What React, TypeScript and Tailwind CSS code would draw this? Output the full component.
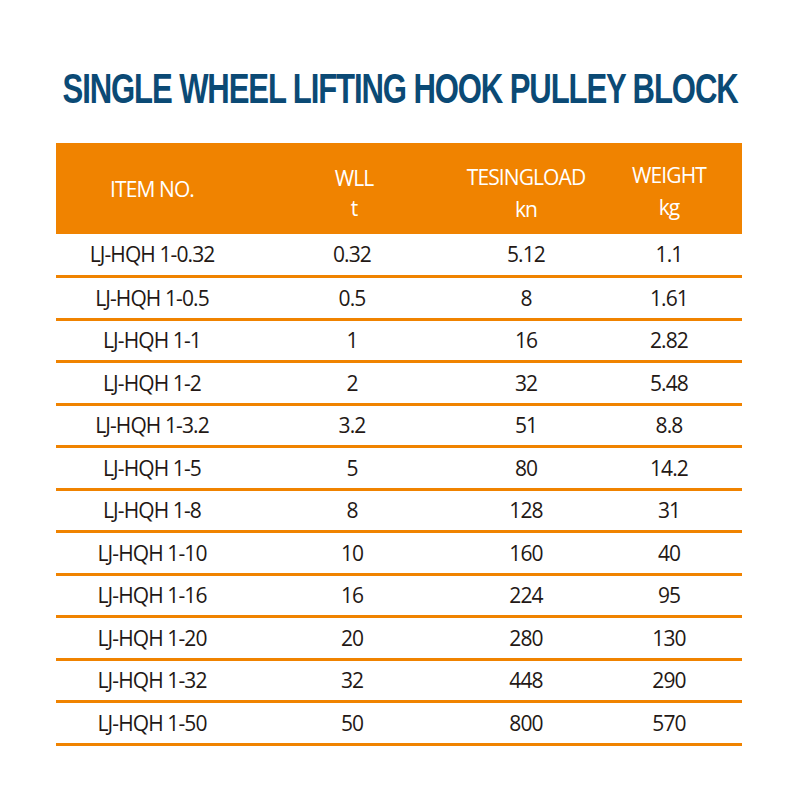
import React from 'react'

const rows = [
  ['LJ-HQH 1-0.32', '0.32', '5.12', '1.1'],
  ['LJ-HQH 1-0.5', '0.5', '8', '1.61'],
  ['LJ-HQH 1-1', '1', '16', '2.82'],
  ['LJ-HQH 1-2', '2', '32', '5.48'],
  ['LJ-HQH 1-3.2', '3.2', '51', '8.8'],
  ['LJ-HQH 1-5', '5', '80', '14.2'],
  ['LJ-HQH 1-8', '8', '128', '31'],
  ['LJ-HQH 1-10', '10', '160', '40'],
  ['LJ-HQH 1-16', '16', '224', '95'],
  ['LJ-HQH 1-20', '20', '280', '130'],
  ['LJ-HQH 1-32', '32', '448', '290'],
  ['LJ-HQH 1-50', '50', '800', '570'],
]

// column widths inside the 686px table
const cols = 'grid grid-cols-[192px_208px_140px_146px]'

export default function App() {
  return (
    <div className="w-[800px] h-[800px] bg-white pt-[67px] font-['Open_Sans',sans-serif]">
      <div className="flex justify-center">
        <h1 className="whitespace-nowrap text-[#0b4a75] font-bold text-[42px] leading-[44px] tracking-[-1.5px] font-['Liberation_Sans',sans-serif] scale-x-[0.74]">
          SINGLE WHEEL LIFTING HOOK PULLEY BLOCK
        </h1>
      </div>

      <div className="ml-[56px] mt-[32px] w-[686px]">
        {/* 表頭 */}
        <div className={`${cols} h-[91px] bg-[#f08300] text-white text-[21px] leading-[32px] tracking-[-0.9px]`}>
          <div className="flex items-center justify-center">ITEM NO.</div>
          <div className="flex flex-col items-center justify-center pl-[4px] pt-[8px]">
            <span>WLL</span>
            <span className="-mt-[2px]">t</span>
          </div>
          <div className="flex flex-col items-center justify-center pt-[8px]">
            <span>TESINGLOAD</span>
            <span>kn</span>
          </div>
          <div className="flex flex-col items-center justify-center pt-[4px]">
            <span>WEIGHT</span>
            <span>kg</span>
          </div>
        </div>

        {rows.map((r, i) => (
          <div
            key={r[0]}
            className={`${cols} ${i === 0 ? 'h-[44px]' : 'h-[42.5px]'} border-b-[3px] border-[#f08300] text-[#231815] text-[21px] tracking-[-0.9px]`}
          >
            {r.map((c, j) => (
              <div key={j} className="flex items-center justify-center pt-[1px]">
                {c}
              </div>
            ))}
          </div>
        ))}
      </div>
    </div>
  )
}
